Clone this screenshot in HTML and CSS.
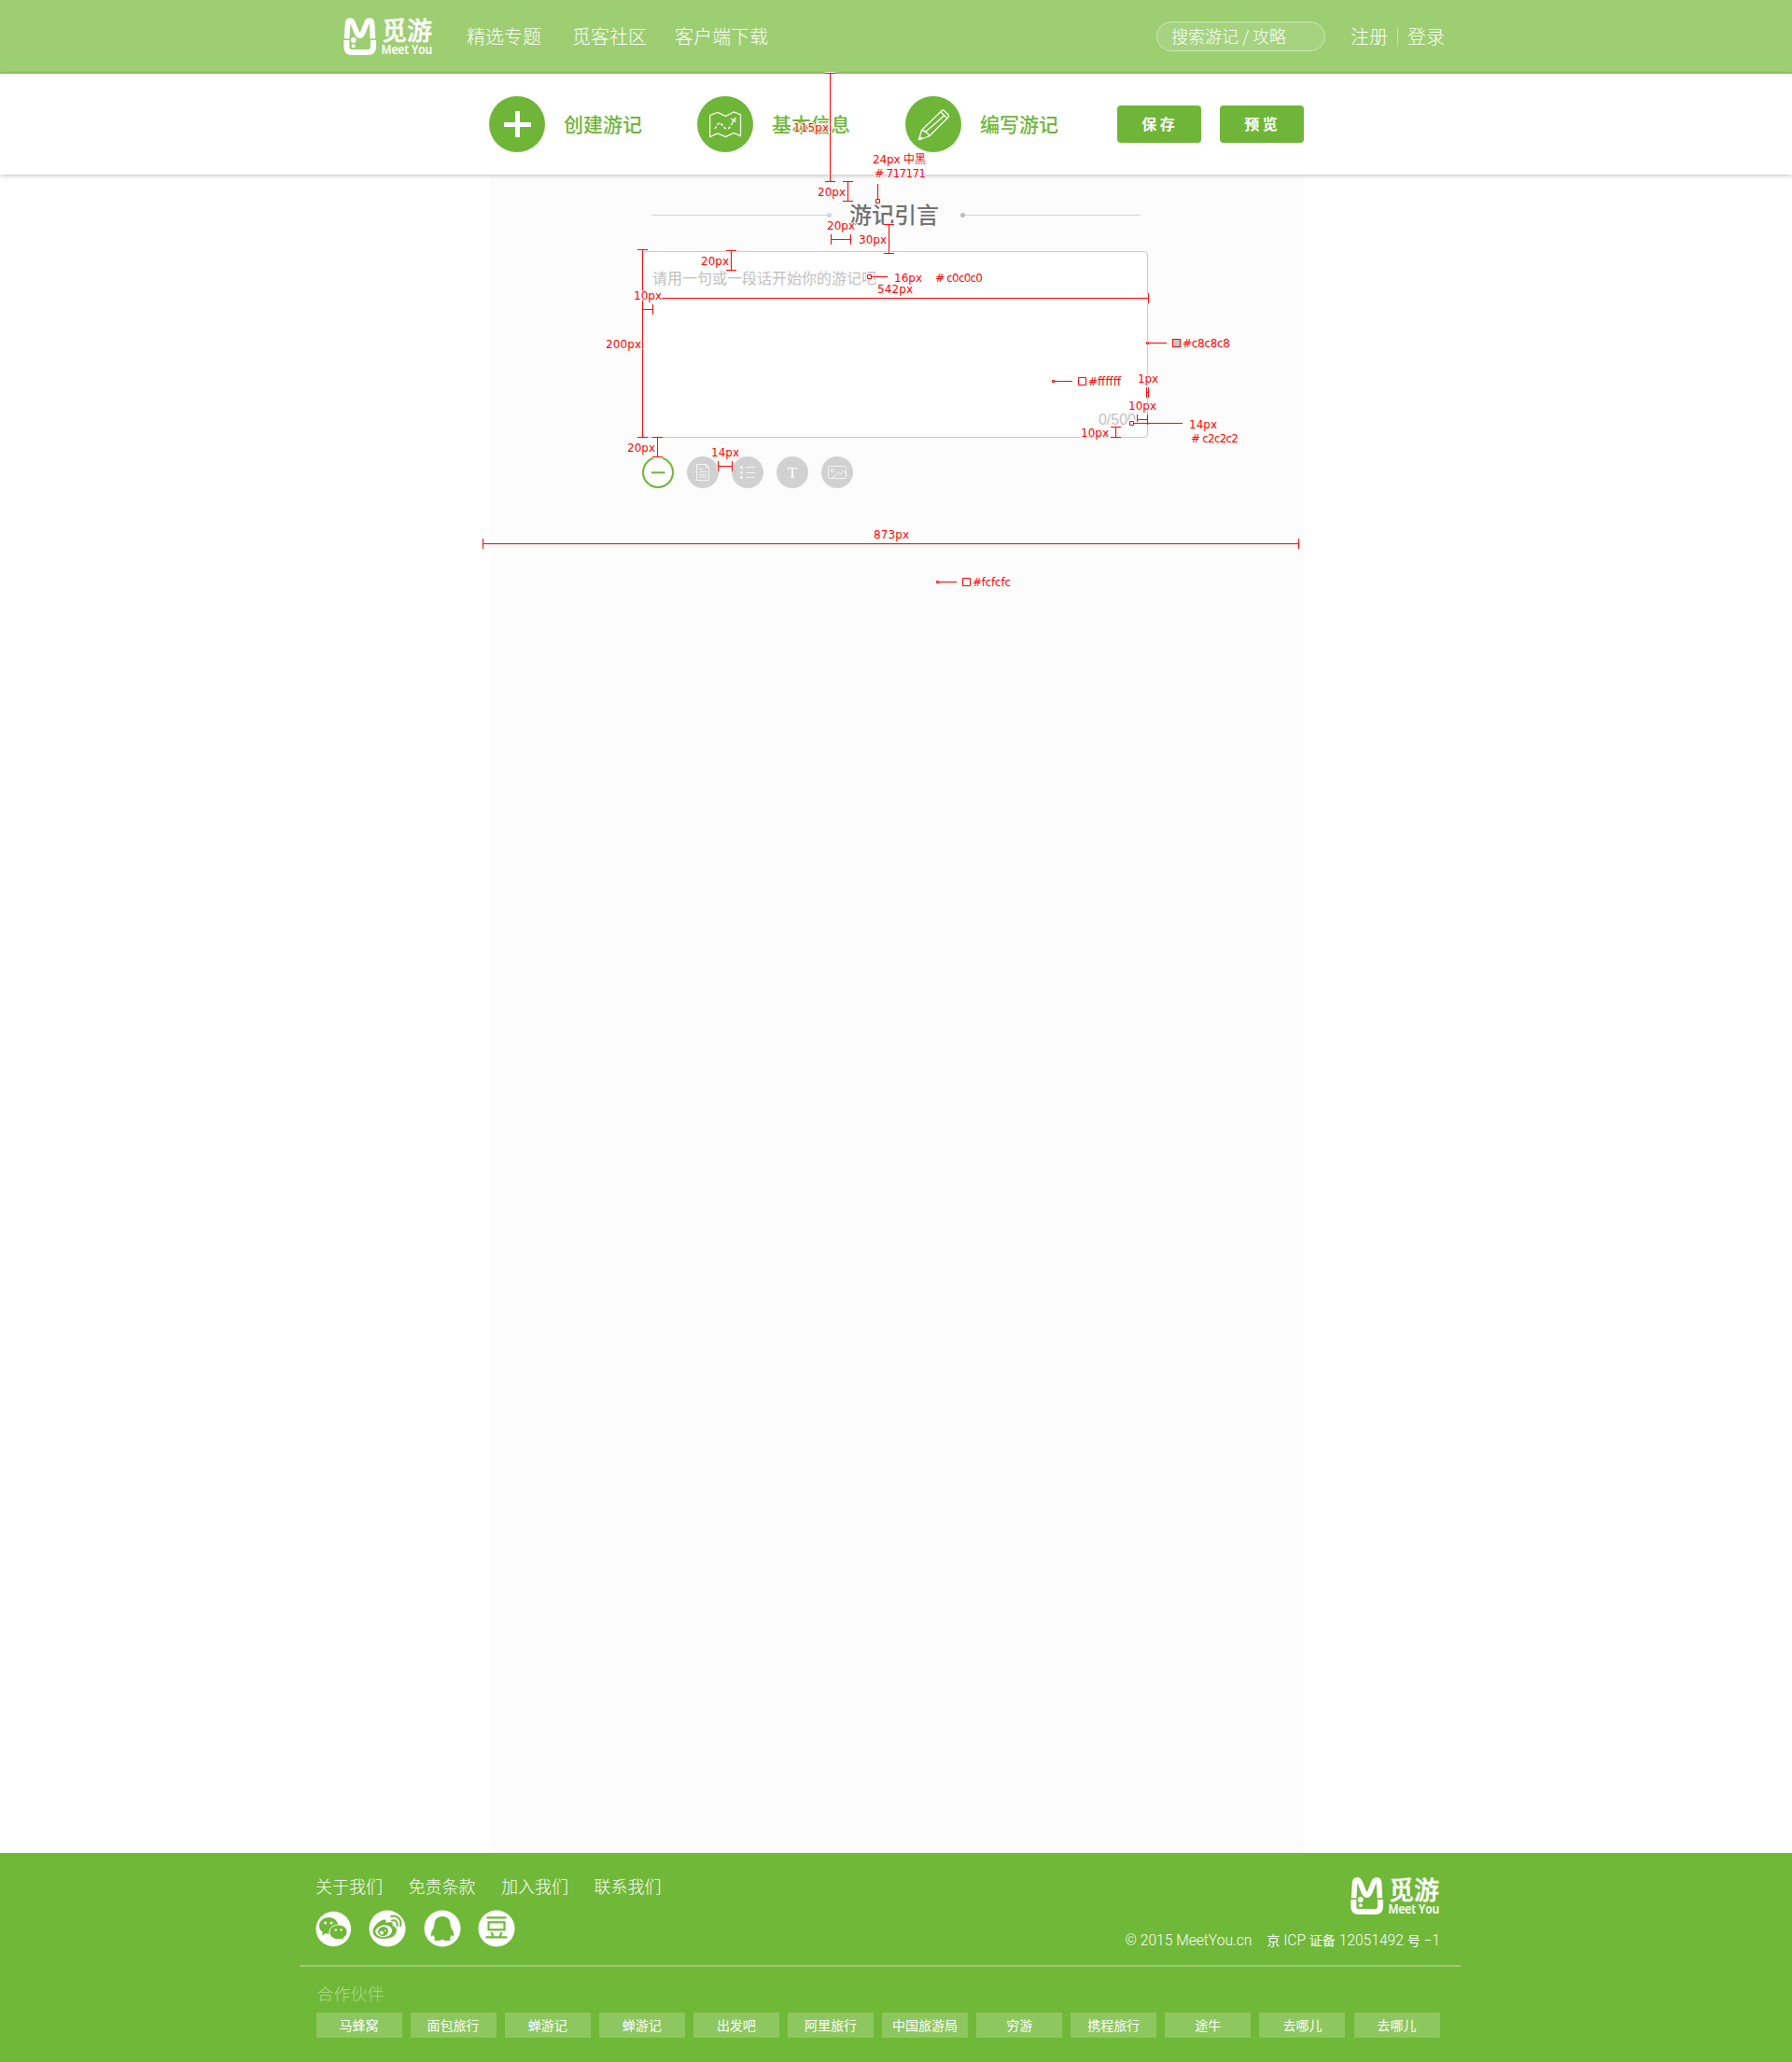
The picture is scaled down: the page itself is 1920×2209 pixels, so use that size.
FILE: index.html
```html
<!DOCTYPE html>
<html lang="zh-CN">
<head>
<meta charset="utf-8">
<title>觅游 - 编写游记</title>
<link rel="stylesheet" href="styles.css">
</head>
<body>
<header class="top">
  <div class="top-inner">
    <svg class="logo" width="96" height="42">
      <path d="M3.600 22.400 4.600 5.600Q5 3 7.200 3 9.200 3 10 5.400L14.400 16.400Q17.500 22 20.600 16.400L25 5.400Q25.800 3 28 3 30.200 3 30.500 5.600L31.400 22.400" fill="none" stroke="#fff" stroke-width="5.600"/>
      <path d="M3.300 24V31.500Q3.300 37 9 37H26Q31.900 37 31.900 31.500V24" fill="none" stroke="#fff" stroke-width="6"/>
      <circle cx="10.700" cy="24" r="2.900" fill="#fff"/><circle cx="10.700" cy="30.300" r="2" fill="#fff"/>
      <text x="41" y="24" class="logo-cn" textLength="54" lengthAdjust="spacingAndGlyphs">觅游</text>
      <text x="40.500" y="39.300" class="logo-en" textLength="54.500" lengthAdjust="spacingAndGlyphs">Meet You</text>
    </svg>
    <nav class="nav"><a>精选专题</a><a>觅客社区</a><a>客户端下载</a></nav>
    <div class="search">搜索游记 / 攻略</div>
    <div class="account"><a>注册</a><i></i><a>登录</a></div>
  </div>
</header>

<section class="steps">
  <div class="steps-inner">
    <div class="step">
      <svg width="60" height="60"><circle cx="30" cy="30" r="30" fill="#6fb638"/><path d="M30.500 16V44M16 30.500H45" stroke="#fff" stroke-width="5"/></svg>
      <span>创建游记</span>
    </div>
    <div class="step">
      <svg width="60" height="60" fill="none" stroke="#fff" stroke-width="1.200"><circle cx="30" cy="30" r="30" fill="#6fb638" stroke="none"/><path d="M13.600 20.500 22 17.500 30.500 21.500 39 17 46.500 20V42.500L39 39.500 30.500 43.500 22 40 13.600 43.500Z"/><path d="M19 35 21 31 24.500 28.500 30 34.500 34 34.500 39 27" stroke-width="1.600" stroke-dasharray="3 2"/><path d="M36.500 24 41.500 27.500M41.500 23 37.500 28" stroke-width="1.500"/></svg>
      <span>基本信息</span>
    </div>
    <div class="step">
      <svg width="60" height="60" fill="none" stroke="#fff" stroke-width="1.300" stroke-linejoin="round"><circle cx="30" cy="30" r="30" fill="#6fb638" stroke="none"/><path d="M14.500 46.500 17.500 36.500 39 15.500Q40 14.500 41.500 15.500L46 20Q47 21.500 46 22.500L25.500 43Z"/><path d="M17.500 36.500Q21 37 21.500 38.500 25 40 25.500 43M21.500 38.500 42 20.500M38 17 44 23M14.500 46.500 15.500 43.500 18 45.500Z"/></svg>
      <span>编写游记</span>
    </div>
    <button class="btn">保 存</button>
    <button class="btn">预 览</button>
  </div>
</section>

<main class="page">
  <h1 class="title"><i class="rule left"></i><span>游记引言</span><i class="rule right"></i></h1>
  <div class="editor"><p>请用一句或一段话开始你的游记吧</p><small>0/500</small></div>
  <div class="tools">
    <svg width="34" height="34"><circle cx="17" cy="17" r="16" fill="#fdfdfd" stroke="#6fb638" stroke-width="2"/><path d="M10 17.300H24.500" stroke="#6fb638" stroke-width="2"/></svg>
    <svg width="34" height="34" fill="none" stroke="#f4f4f4"><circle cx="17" cy="17" r="17" fill="#d1d1d1" stroke="none"/><path d="M10.500 8.500H20.500L23.500 11.500V25.500H10.500ZM20.500 8.500V11.500H23.500M13 13.500H17.500M13 16.500H21M13 19.500H21M13 22H21"/></svg>
    <svg width="34" height="34" fill="none" stroke="#f4f4f4"><circle cx="17" cy="17" r="17" fill="#d1d1d1" stroke="none"/><path d="M9 11.500H12M9 17.500H12M9 22.500H12" stroke-width="2.600"/><path d="M15 11.500H25M15 17.500H25M15 22.500H25"/></svg>
    <svg width="34" height="34"><circle cx="17" cy="17" r="17" fill="#d1d1d1"/><text x="17" y="23" class="tool-t">T</text></svg>
    <svg width="34" height="34" fill="none" stroke="#f4f4f4"><circle cx="17" cy="17" r="17" fill="#d1d1d1" stroke="none"/><rect x="7.500" y="10.500" width="19" height="13" rx="1"/><circle cx="12" cy="15" r="1.800"/><path d="M12 23 18.500 16.500 20.500 19.500 23.500 15 26.500 19"/></svg>
  </div>
</main>

<footer class="footer">
  <div class="foot-main">
    <div>
      <nav class="foot-links"><a>关于我们</a><a>免责条款</a><a>加入我们</a><a>联系我们</a></nav>
      <div class="social">
        <svg width="39" height="40"><circle cx="19.300" cy="20.500" r="18.800" fill="#fff"/><g fill="#70b838"><path d="M14.500 8C8 8 4 12.500 4 17.200c0 2.800 1.300 5 3.700 6.600L7 27.500l4-2.300c1.200.3 2.300.5 3.500.5L24.500 17C24 12 20 8 14.500 8z"/><path d="M24.500 16C19 16 15 19.500 15 24c0 4.300 4 7.800 9.500 7.800 1.200 0 2.200-.2 3.200-.5l3.100 1.700-.8-3c2.500-1.500 4-3.500 4-6 0-4.500-4-8-9.500-8z" stroke="#fff"/></g><g fill="#fff"><circle cx="10.500" cy="14" r="1.500"/><circle cx="17" cy="14" r="1.500"/><circle cx="21.800" cy="21.500" r="1.200"/><circle cx="27.500" cy="21.500" r="1.200"/></g></svg>
        <svg width="40" height="40"><circle cx="20" cy="20" r="19.500" fill="#fff"/><path d="M17.500 10.500c2 .5 1 3.500 1 3.500s4.500-2 6.500-.5c1.500 1.200.5 3.500.5 3.500s4.500 1 4.500 5c0 5-6 9-13.500 9S4.500 27.500 4.500 23c0-6 9-13.500 13-12.500z" fill="#70b838"/><ellipse cx="16.200" cy="22.800" rx="9" ry="6.300" fill="#fff" transform="rotate(-7 16 23)"/><ellipse cx="15.500" cy="23.300" rx="5.600" ry="5" fill="#70b838" transform="rotate(-20 15 23)"/><circle cx="14" cy="24.500" r="2" fill="#fff"/><circle cx="17.800" cy="22.300" r=".9" fill="#fff"/><path d="M24 7c6-2 12 3.500 10 10M25 11.500c3.500-1 6.500 1.500 5.500 5.500" fill="none" stroke="#70b838" stroke-width="2" stroke-linecap="round"/></svg>
        <svg width="40" height="40"><circle cx="20" cy="20" r="19.500" fill="#fff"/><path d="M20 7c-5.500 0-9 4-8.500 9.500-.8 1-1 2-.8 3C8.500 22.300 7 26 8 28.500c.8 0 1.800-.8 2.300-1.700.3 1.300 1 2.500 2 3.500-1.300.6-1.700 2.200 0 2.500 2.700.5 5.700.2 7.700-1 2 1.200 5 1.500 7.700 1 1.700-.3 1.300-1.900 0-2.500 1-1 1.700-2.200 2-3.500.5.900 1.500 1.700 2.300 1.700 1-2.500-.5-6.200-2.700-9 .2-1 0-2-.8-3C29 11 25.500 7 20 7z" fill="#70b838"/></svg>
        <svg width="40" height="40"><circle cx="20" cy="20" r="19.500" fill="#fff"/><path d="M9.500 8.300H30.500M8.500 29.300H31.500M14.500 24 16.500 29M25.500 24 23.500 29" stroke="#70b838" stroke-width="2.200"/><rect x="11.500" y="13.300" width="17" height="8" fill="none" stroke="#70b838" stroke-width="2.200"/></svg>
      </div>
    </div>
    <div class="foot-right">
      <svg class="logo" width="96" height="42">
        <path d="M3.600 22.400 4.600 5.600Q5 3 7.200 3 9.200 3 10 5.400L14.400 16.400Q17.500 22 20.600 16.400L25 5.400Q25.800 3 28 3 30.200 3 30.500 5.600L31.400 22.400" fill="none" stroke="#fff" stroke-width="5.600"/>
        <path d="M3.300 24V31.500Q3.300 37 9 37H26Q31.900 37 31.900 31.500V24" fill="none" stroke="#fff" stroke-width="6"/>
        <circle cx="10.700" cy="24" r="2.900" fill="#fff"/><circle cx="10.700" cy="30.300" r="2" fill="#fff"/>
        <text x="41" y="24" class="logo-cn" textLength="54" lengthAdjust="spacingAndGlyphs">觅游</text>
        <text x="40.500" y="39.300" class="logo-en" textLength="54.500" lengthAdjust="spacingAndGlyphs">Meet You</text>
      </svg>
      <div class="legal"><span>© 2015 MeetYou.cn</span><span><b>京</b> ICP <b>证备</b> 12051492 <b>号</b> −1</span></div>
    </div>
  </div>
  <div class="partners">
    <h2>合作伙伴</h2>
    <ul><li>马蜂窝</li><li>面包旅行</li><li>蝉游记</li><li>蝉游记</li><li>出发吧</li><li>阿里旅行</li><li>中国旅游局</li><li>穷游</li><li>携程旅行</li><li>途牛</li><li>去哪儿</li><li>去哪儿</li></ul>
  </div>
</footer>

<!-- Design specification marks -->
<svg class="spec" width="1920" height="700">
  <defs>
    <g id="marks">
      <path d="M889.500 78V195M884 78.500h11M884 194.500h11"/>
      <path d="M908.500 194V216M903 194.500h11M903 215.500h11"/>
      <path d="M940.500 197V213M938.500 213.500h4v4h-4z"/>
      <path d="M890.500 256.500H911.500M890.500 251v11M911.500 251v11"/>
      <path d="M952.500 240V272M947 240.500h11M947 271.500h11"/>
      <path d="M688.500 267V468M683 267.500h11M683 468.500h11"/>
      <path d="M783.500 268V290M778 268.500h11M778 289.500h11"/>
      <path d="M688.500 331.500H699.500M688.500 326v11M699.500 326v11"/>
      <path d="M689 319.500H1230M1230.500 314v11"/>
      <path d="M929.500 294.500h4v4h-4zM934 296.500H951"/>
      <path d="M1228.500 366.500h2v2h-2zM1231 367.500H1250"/>
      <path d="M1127.500 407.500h2v2h-2zM1130 408.500H1149"/>
      <path d="M1228.500 415v11M1230.500 415v11M1228 420.500h3"/>
      <path d="M1218.500 449.500H1229.500M1218.500 444v8M1229.500 444v11"/>
      <path d="M1210.500 451.500h4v4h-4zM1215 453.500H1267"/>
      <path d="M1195.500 457V469M1190 457.500h11M1190 468.500h11"/>
      <path d="M704.500 468V490M699 468.500h11M699 489.500h11"/>
      <path d="M769.500 499.500H784.500M769.500 494v11M784.500 494v11"/>
    </g>
  </defs>
  <use href="#marks" class="halo"/>
  <use href="#marks" class="line"/>
  <path class="line" d="M517.500 577v11M517.500 582.500H1391.500M1391.500 577v11M1003.500 622.500h2v2h-2zM1006 623.500H1025M1031.500 619.500h8v8h-8zM1155.500 404.500h8v8h-8z"/>
  <rect class="line swatch" x="1256.500" y="363.500" width="8" height="8"/>
  <g class="labels">
    <text x="850" y="141" textLength="38">115px</text>
    <text x="876" y="210" textLength="30">20px</text>
    <text x="935" y="175" textLength="57">24px 中黑</text>
    <text x="937" y="190" textLength="55"># 717171</text>
    <text x="886" y="246" textLength="30">20px</text>
    <text x="920" y="261" textLength="30">30px</text>
    <text x="751" y="284" textLength="30">20px</text>
    <text x="679" y="321" textLength="30">10px</text>
    <text x="649" y="373" textLength="38">200px</text>
    <text x="940" y="314" textLength="38">542px</text>
    <text x="958" y="302" textLength="30">16px</text>
    <text x="1002" y="302" textLength="51"># c0c0c0</text>
    <text x="1267" y="372" textLength="51">#c8c8c8</text>
    <text x="1166" y="413" textLength="35">#ffffff</text>
    <text x="1219" y="410" textLength="22">1px</text>
    <text x="1209" y="439" textLength="30">10px</text>
    <text x="1274" y="459" textLength="30">14px</text>
    <text x="1276" y="474" textLength="51"># c2c2c2</text>
    <text x="1158" y="468" textLength="30">10px</text>
    <text x="672" y="484" textLength="30">20px</text>
    <text x="762" y="489" textLength="30">14px</text>
    <text x="936" y="577" textLength="38">873px</text>
    <text x="1042" y="628" textLength="41">#fcfcfc</text>
  </g>
</svg>
</body>
</html>
```
FILE: styles.css
```css
* { box-sizing: border-box; }
body { margin: 0; position: relative; background: #fff; font-family: "Noto Sans CJK SC", sans-serif; }
p, h1, h2, ul { margin: 0; padding: 0; }
svg { display: block; flex: none; }
.logo { overflow: visible; }
.logo-cn { font: 500 27px "Noto Sans CJK SC", sans-serif; fill: #fff; stroke: #fff; stroke-width: .4; }
.logo-en { font: 600 14px "Open Sans", sans-serif; fill: #fff; stroke: #fff; stroke-width: .2; }

.top { height: 79px; background: #9dce72; box-shadow: inset 0 -1px 1px #8fc461; color: #fff; }
.top .logo { margin-top: 1px; }
.top-inner { display: flex; align-items: center; width: 1180px; height: 78px; margin-left: 368px; font-size: 20px; font-weight: 300; white-space: nowrap; }
.nav { display: flex; gap: 33px; margin-left: 36px; width: 739px; padding-bottom: 2px; }
.nav a:last-child { margin-left: -3px; }
.search { width: 181px; height: 32px; padding-left: 15px; border: 1px solid #cde7b7; border-radius: 16px; background: #a5d37f; font-size: 18px; line-height: 29px; }
.account { display: flex; align-items: center; margin-left: 27px; gap: 10px; }
.account a { margin-top: -2px; }
.account i { width: 1px; height: 20px; background: #c9e5b2; }

.steps { position: relative; height: 108px; background: #fff; box-shadow: 0 1px 5px rgba(0, 0, 0, .25); }
.steps-inner { display: flex; align-items: center; width: 873px; height: 108px; margin-left: 524px; }
.step { display: flex; align-items: center; gap: 20px; width: 223px; color: #6fb638; font-size: 21px; font-weight: 500; line-height: 30px; }
.step span { margin-top: -3px; }
.step:nth-child(3) { width: 227px; }
.btn { width: 90px; height: 40px; padding: 0 2px 2px 0; border: 0; border-radius: 4px; background: #6fb638; color: #fff; font: 700 16px "Noto Sans CJK SC", sans-serif; }
.btn + .btn { margin-left: 20px; }

.page { width: 872px; height: 1798px; margin-left: 525px; padding: 25px 0 0 163px; background: #fcfcfc; }
.title { display: flex; align-items: center; height: 36px; margin-left: 10px; color: #717171; font-size: 24px; font-weight: 500; }
.title span { width: 96px; line-height: 36px; margin: -3px 23px 0 19px; }
.rule { display: flex; align-items: center; width: 193px; }
.rule::before, .rule::after { content: ""; height: 1px; background: #d4d4d4; flex: 1; }
.left::after, .right::before { flex: none; width: 5px; height: 5px; border-radius: 50%; }
.right::before { background: #bbb; }
.editor { display: flex; flex-direction: column; justify-content: space-between; width: 542px; height: 200px; margin-top: 21px; padding: 15px 12px 7px 10px; border: 1px solid #c8c8c8; border-radius: 4px; background: #fff; color: #c0c0c0; font-size: 16px; line-height: 24px; }
.editor small { align-self: flex-end; color: #c2c2c2; font: 16px/22px "Liberation Sans", sans-serif; }
.tools { display: flex; gap: 14px; margin-top: 20px; }
.tool-t { font: 17px "Liberation Serif", serif; text-anchor: middle; fill: #fff; }

.footer { height: 224px; background: #70b838; color: #fff; }
.foot-main { display: flex; justify-content: space-between; width: 1244px; height: 122px; margin-left: 321px; padding: 21px 22px 0 17px; border-bottom: 2px solid #9ccd74; }
.foot-links { display: flex; gap: 27.500px; font-size: 18px; font-weight: 300; line-height: 28px; }
.social { display: flex; gap: 18.300px; margin-top: 12px; }
.foot-right { display: flex; flex-direction: column; align-items: flex-end; }
.foot-right .logo { margin-top: 5px; }
.legal { display: flex; gap: 16px; margin-top: 14px; font: 300 15.600px/24px Roboto, "Noto Sans CJK SC", sans-serif; white-space: nowrap; }
.legal b { font-size: 14px; font-weight: 400; }
.partners { padding: 14px 0 0 338.500px; }
.partners h2 { padding-left: 1px; color: #b2da90; font-size: 18px; font-weight: 300; line-height: 28px; }
.partners ul { display: flex; gap: 9.100px; margin-top: 7px; list-style: none; }
.partners li { width: 92px; height: 27px; background: #8dc75f; font-size: 14px; line-height: 26px; text-align: center; }

.spec { position: absolute; left: 0; top: 0; pointer-events: none; }
.line { fill: none; stroke: #f00; }
.halo { fill: none; stroke: #fff; stroke-width: 3; }
.swatch { fill: #c8c8c8; }
.labels { font: 12px "DejaVu Sans", "Noto Sans CJK SC", sans-serif; fill: #f00; stroke: #fff; stroke-width: 2; paint-order: stroke; }
```
